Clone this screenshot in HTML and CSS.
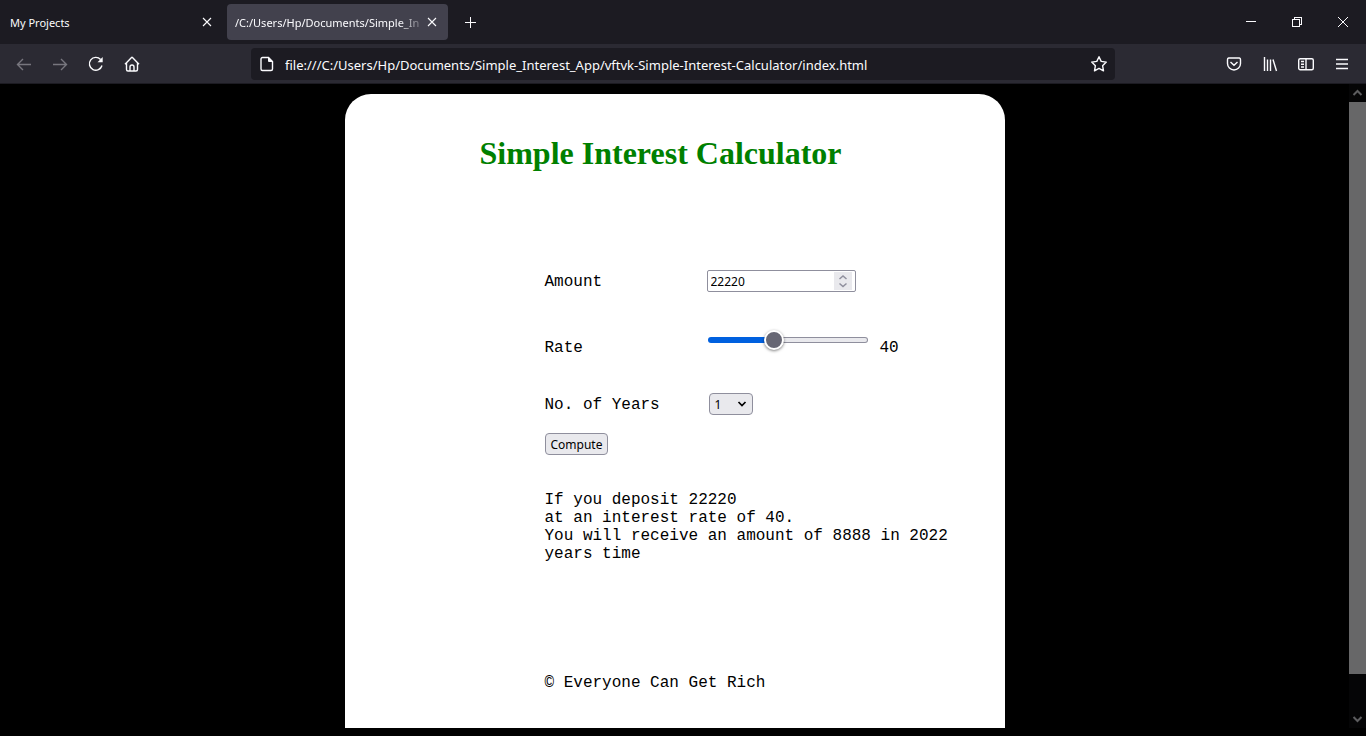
FILE: index.html
```html
<!DOCTYPE html>
<html lang="en">
<head>
<meta charset="utf-8">
<meta name="viewport" content="width=device-width, initial-scale=1">
<title>Simple Interest Calculator</title>
<link rel="stylesheet" href="styles.css">
</head>
<body class="browser">
<header class="chrome">
  <div class="tabbar">
    <div class="tab">
      <span class="tab-title">My Projects</span>
      <button class="icon-btn tab-close" type="button" aria-label="Close My Projects"><svg class="icon" width="10" height="10" viewBox="0 0 10 10"><path d="M1 1l8 8M9 1L1 9"/></svg></button>
    </div>
    <div class="tab tab-active">
      <span class="tab-title">/C:/Users/Hp/Documents/Simple_In</span>
      <button class="icon-btn tab-close" type="button" aria-label="Close current tab"><svg class="icon" width="10" height="10" viewBox="0 0 10 10"><path d="M1 1l8 8M9 1L1 9"/></svg></button>
    </div>
    <button class="icon-btn new-tab" type="button" aria-label="New tab"><svg class="icon crisp" width="13" height="13" viewBox="0 0 13 13"><path d="M6.500 1v11M1 6.500h11"/></svg></button>
    <div class="window-controls">
      <button class="icon-btn" type="button" aria-label="Minimize"><svg class="icon crisp" width="12" height="12" viewBox="0 0 12 12"><path d="M1 5.500h10"/></svg></button>
      <button class="icon-btn" type="button" aria-label="Restore"><svg class="icon crisp" width="12" height="12" viewBox="0 0 12 12"><path d="M1.500 3.500h7v7h-7zM3.500 3.500v-2h7v7h-2"/></svg></button>
      <button class="icon-btn" type="button" aria-label="Close window"><svg class="icon thin" width="12" height="12" viewBox="0 0 12 12"><path d="M1 1l10 10M11 1L1 11"/></svg></button>
    </div>
  </div>
  <div class="toolbar">
    <div class="nav">
      <button class="icon-btn dim" type="button" aria-label="Back"><svg class="icon bold" width="16" height="16" viewBox="0 0 16 16"><path d="M15 8.500H1.500M7 3L1.500 8.500 7 14"/></svg></button>
      <button class="icon-btn dim" type="button" aria-label="Forward"><svg class="icon bold" width="16" height="16" viewBox="0 0 16 16"><path d="M1 8.500h13.500M9 3L14.500 8.500 9 14"/></svg></button>
      <button class="icon-btn" type="button" aria-label="Reload"><svg class="icon bold" width="16" height="16" viewBox="0 0 16 16"><path d="M14 9.500A6.400 6.400 0 1 1 12.600 3.500"/><path class="solid" d="M14.700 1v5.200H9.500z"/></svg></button>
      <button class="icon-btn" type="button" aria-label="Home"><svg class="icon bold" width="16" height="16" viewBox="0 0 16 16"><path d="M1 8.300L7.300 1.700a1 1 0 0 1 1.400 0L15 8.300M2.500 7v6.500a1.500 1.500 0 0 0 1.500 1.500h8a1.500 1.500 0 0 0 1.500-1.500V7M6 15v-4a2 2 0 0 1 4 0v4"/></svg></button>
    </div>
    <div class="urlbar">
      <svg class="icon bold" width="16" height="16" viewBox="0 0 16 16"><path d="M3.500 1.500h6L13.500 5.500v7.500a1.500 1.500 0 0 1-1.500 1.500H3.500a1.500 1.500 0 0 1-1.500-1.500V3a1.500 1.500 0 0 1 1.500-1.500z"/><path class="solid" d="M9 1l5 5H10a1 1 0 0 1-1-1z"/></svg>
      <input class="url" type="text" aria-label="Address" value="file:///C:/Users/Hp/Documents/Simple_Interest_App/vftvk-Simple-Interest-Calculator/index.html">
      <button class="icon-btn" type="button" aria-label="Bookmark this page"><svg class="icon bold" width="18" height="18" viewBox="0 0 18 18"><path stroke-linejoin="round" d="M9 1.700l2.200 4.700 5.100.7-3.700 3.600.9 5.100L9 13.400l-4.500 2.400.9-5.100L1.700 7.100l5.100-.7z"/></svg></button>
    </div>
    <div class="tools">
      <button class="icon-btn" type="button" aria-label="Save to Pocket"><svg class="icon bold" width="16" height="16" viewBox="0 0 16 16"><path d="M2.700 2h10.600a1.700 1.700 0 0 1 1.200 1.700V7.500a6.500 6.500 0 0 1-13 0V3.700A1.700 1.700 0 0 1 2.700 2zM4.500 6L8 9.300 11.500 6"/></svg></button>
      <button class="icon-btn" type="button" aria-label="Library"><svg class="icon bold" width="16" height="16" viewBox="0 0 16 16"><path d="M2.500 1v14M5.500 3.500V15M8.500 3.500V15M11 3.500L14.500 15"/></svg></button>
      <button class="icon-btn" type="button" aria-label="Sidebars"><svg class="icon bold" width="16" height="16" viewBox="0 0 16 16"><rect x=".7" y="2.700" width="14.600" height="11" rx="1.500"/><path d="M8 3v11M3 5.500h3M3 8.200h3M3 11h3"/></svg></button>
      <button class="icon-btn" type="button" aria-label="Menu"><svg class="icon bold" width="14" height="14" viewBox="0 0 14 14"><path d="M1 2.500h12M1 7h12M1 11.500h12"/></svg></button>
    </div>
  </div>
</header>
<div class="viewport">
  <main class="page">
    <section class="card">
      <h1 class="heading">Simple Interest Calculator</h1>
      <form class="calculator">
        <label class="label" for="amount">Amount</label>
        <div class="number-field">
          <input class="control" id="amount" type="number" value="22220">
          <svg class="spinner" width="18" height="18" viewBox="0 0 18 18"><path d="M5.500 7L9 4l3.500 3M5.500 11.500l3.500 3 3.500-3"/></svg>
        </div>
        <label class="label label-rate" for="rate">Rate</label>
        <div class="range-field">
          <input class="slider" id="rate" type="range" min="0" max="100" value="40">
          <output class="rate-value" for="rate">40</output>
        </div>
        <label class="label" for="years">No. of Years</label>
        <div class="select-field">
          <select class="control" id="years"><option>1</option><option>2</option><option>3</option></select>
          <svg class="chevron" width="10" height="10" viewBox="0 0 10 10"><path d="M1.500 3L5 6.500 8.500 3"/></svg>
        </div>
        <button class="control compute" type="button">Compute</button>
      </form>
      <p class="result">If you deposit 22220<br>at an interest rate of 40.<br>You will receive an amount of 8888 in 2022 years time</p>
      <footer>© Everyone Can Get Rich</footer>
    </section>
  </main>
  <div class="scrollbar" aria-hidden="true">
    <svg class="scroll-arrow" width="17" height="18" viewBox="0 0 17 18"><path d="M4.500 11L8.500 7l4 4"/></svg>
    <div class="scroll-track"><div class="scroll-thumb"></div><div class="scroll-rest"></div></div>
    <svg class="scroll-arrow" width="17" height="18" viewBox="0 0 17 18"><path d="M4.500 7l4 4 4-4"/></svg>
  </div>
</div>
</body>
</html>
```
FILE: styles.css
```css
* { box-sizing: border-box; }

.browser {
  display: flex;
  flex-direction: column;
  min-height: 100vh;
  margin: 0;
  padding-bottom: 8px;
  background: #000;
  font-family: "Noto Sans", sans-serif;
  font-size: 12px;
}

.icon-btn {
  display: grid;
  place-items: center;
  padding: 0;
  border: 0;
  background: none;
  color: inherit;
}

.icon { flex: none; fill: none; stroke: currentColor; stroke-width: 1.1; }
.thin { stroke-width: 1; }
.bold { stroke-width: 1.4; }
.crisp { shape-rendering: crispEdges; stroke-width: 1; }
.solid { fill: currentColor; stroke: none; }

.chrome { color: #fbfbfe; }

.tabbar {
  display: flex;
  align-items: center;
  height: 44px;
  background: #1c1b22;
}

.tab {
  display: flex;
  align-items: center;
  width: 221px;
  height: 36px;
  padding: 0 11px 0 8px;
  border-radius: 4px;
  font-size: 11px;
}
.tab:first-child { margin: 0 4px 0 2px; }
.tab-active { background: #42414d; }
.tab-title { flex: 1; white-space: nowrap; }
.tab-active .tab-title { mask-image: linear-gradient(to left, transparent, #000 28px); }
.tab-close { width: 10px; height: 16px; }
.new-tab { width: 44px; height: 36px; }
.window-controls { display: flex; margin-left: auto; }
.window-controls .icon-btn { width: 46px; height: 44px; }

.toolbar {
  display: flex;
  align-items: center;
  justify-content: space-between;
  height: 40px;
  border-bottom: 1px solid #1c1b22;
  background: #2b2a33;
}
.nav { display: flex; width: 245px; padding-left: 6px; }
.nav .icon-btn, .tools .icon-btn { width: 36px; height: 36px; }
.dim { color: #77767e; }
.tools { display: flex; width: 245px; justify-content: flex-end; padding-right: 6px; }

.urlbar {
  display: flex;
  flex: 0 1 864px;
  align-items: center;
  gap: 10px;
  height: 32px;
  padding: 0 7px 0 8px;
  border-radius: 4px;
  background: #1c1b22;
}
.url {
  flex: 1;
  min-width: 0;
  padding: 2px 0 0;
  border: 0;
  outline: 0;
  background: none;
  color: inherit;
  font: 13px "Noto Sans", sans-serif;
}

.viewport { display: flex; flex: 1; }
.page { display: flex; flex: 1; padding: 10px 16px 0; }

.card {
  width: 100%;
  max-width: 660px;
  margin: 0 auto;
  padding: 40px 50px 32px 200px;
  border-radius: 26px 26px 0 0;
  background: #fff;
  color: #000;
  font: 16px/18px "Liberation Mono", monospace;
}

.heading {
  margin: 0 0 98px -65px;
  color: #008000;
  font: bold 32px/38px "Liberation Serif", serif;
  white-space: nowrap;
}

.calculator {
  display: grid;
  grid-template-columns: 162px 1fr;
  grid-template-rows: 22px 65px 22px 22px;
  align-items: center;
  row-gap: 18px;
}

.label { padding-top: 2px; }
.label-rate, .rate-value { padding-top: 10px; }

.control {
  height: 22px;
  border: 1px solid #8f8f9d;
  border-radius: 4px;
  background: #e9e9ed;
  color: #000;
  font: 12px "Noto Sans", sans-serif;
}

.number-field, .select-field { display: grid; align-items: center; justify-content: start; }
.number-field > *, .select-field > * { grid-area: 1 / 1; }
.number-field .control {
  width: 149px;
  padding: 0 3px;
  border-radius: 2px;
  background: #fff;
  appearance: textfield;
}
.number-field .control::-webkit-inner-spin-button { appearance: none; }

.spinner, .chevron { justify-self: end; fill: none; pointer-events: none; }
.spinner { margin-right: 4px; background: #e9e9ed; stroke: #8f8f9d; stroke-width: 1.5; }
.chevron { margin-right: 6px; stroke: #000; stroke-width: 1.7; }
.select-field { margin-left: 2px; }
.select-field .control { width: 44px; padding: 0 5px; appearance: none; }

.range-field { display: flex; align-items: center; gap: 12px; }
.slider {
  width: 160px;
  height: 20px;
  margin: 0 0 6px 1px;
  appearance: none;
  background: none;
}
.slider::-webkit-slider-runnable-track {
  height: 6px;
  border: 1px solid transparent;
  border-radius: 3px;
  background:
    linear-gradient(to right, #0060df 42%, #e9e9ed 42%) padding-box,
    linear-gradient(to right, #0060df 42%, #8f8f9d 42%) border-box;
}
.slider::-webkit-slider-thumb {
  width: 20px;
  height: 20px;
  margin-top: -8px;
  border: 2px solid #fff;
  border-radius: 50%;
  appearance: none;
  background: #676774;
  box-shadow: 0 1px 3px rgba(0, 0, 0, 0.5);
}

.compute { grid-column: 1; justify-self: start; padding: 0 5px; }
.result { margin: 36px 0 111px; }

.scrollbar { display: flex; flex-direction: column; width: 17px; background: #050506; }
.scroll-arrow { flex: none; fill: none; stroke: #5d5d5f; stroke-width: 2; }
.scroll-track { display: flex; flex: 1; flex-direction: column; }
.scroll-thumb { flex: 94; background: #676768; }
.scroll-rest { flex: 6; }
```
